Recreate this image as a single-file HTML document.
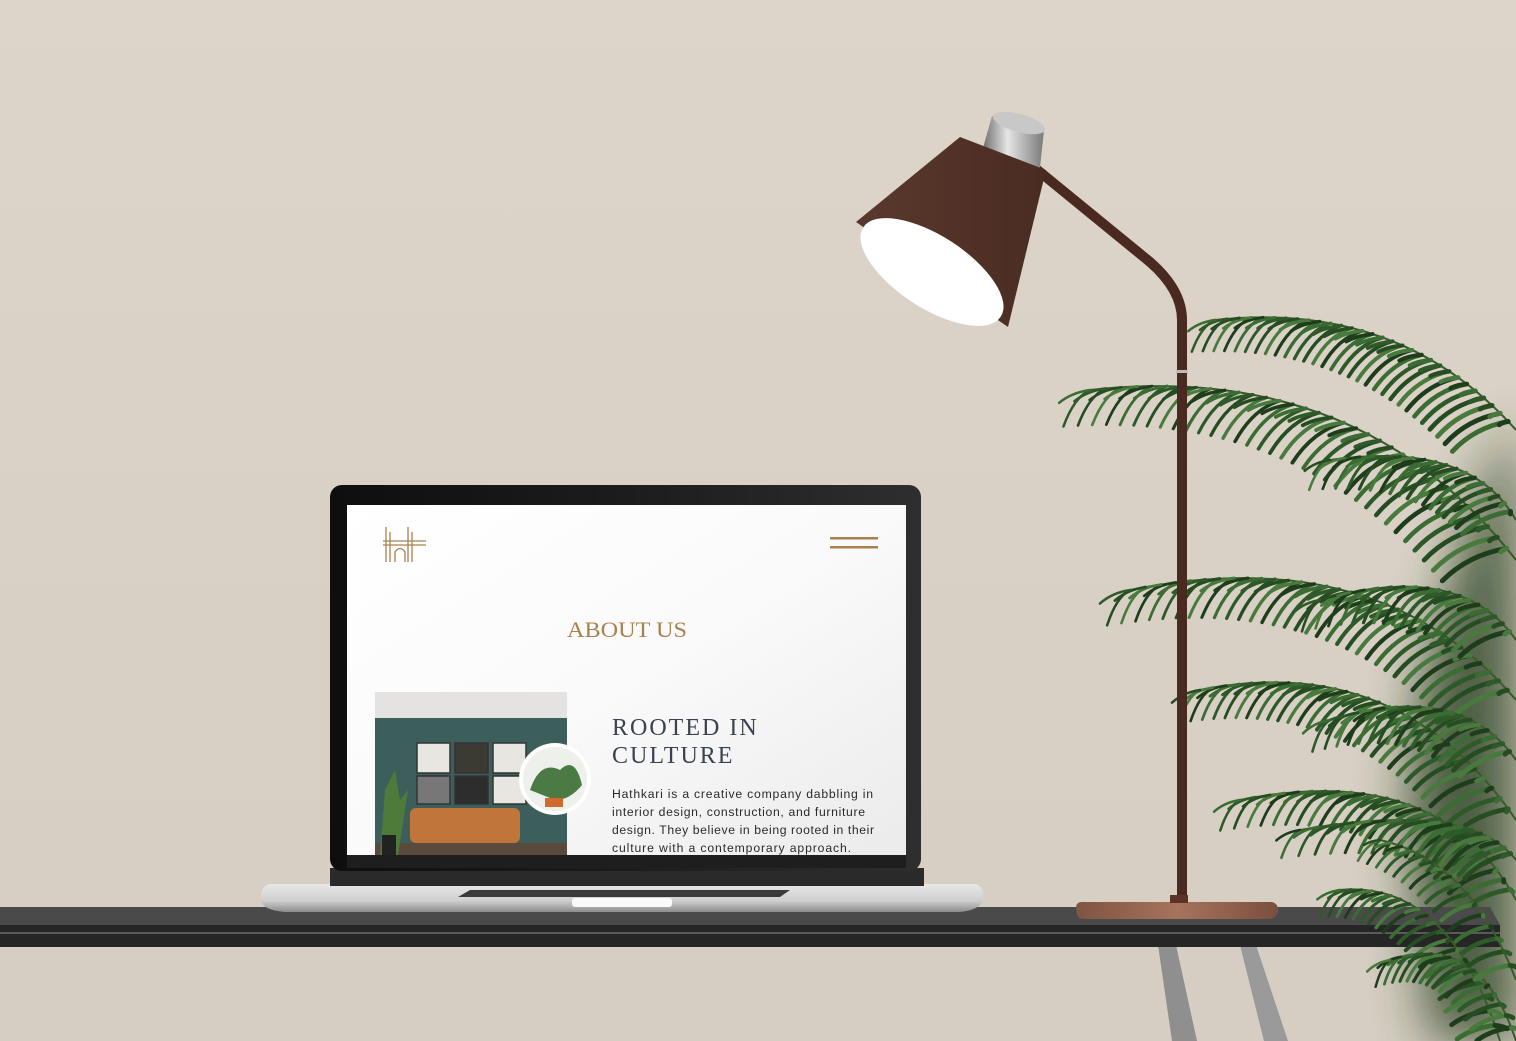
<!DOCTYPE html>
<html><head><meta charset="utf-8"><style>
html,body{margin:0;padding:0;width:1516px;height:1041px;overflow:hidden}
body{background:linear-gradient(180deg,#ddd5ca 0%,#d9d1c5 50%,#d6cec2 100%);position:relative;font-family:"Liberation Sans",sans-serif}
.a{position:absolute}
</style></head><body>
<svg class="a" style="left:0;top:0" width="1516" height="1041">
<defs>
<linearGradient id="scr" x1="0" y1="0" x2="1" y2="1"><stop offset="0" stop-color="#fff"/><stop offset="0.5" stop-color="#fafafa"/><stop offset="1" stop-color="#ebebeb"/></linearGradient>
<linearGradient id="shade" x1="0" y1="0" x2="1" y2="0"><stop offset="0" stop-color="#5a382d"/><stop offset="1" stop-color="#4a2c22"/></linearGradient>
<linearGradient id="cap" x1="0" y1="0" x2="1" y2="0"><stop offset="0" stop-color="#6f6f6f"/><stop offset="0.4" stop-color="#e5e5e5"/><stop offset="1" stop-color="#7a7a7a"/></linearGradient>
<linearGradient id="base" x1="0" y1="0" x2="1" y2="0"><stop offset="0" stop-color="#7e5442"/><stop offset="0.5" stop-color="#a7735c"/><stop offset="1" stop-color="#7a4f3e"/></linearGradient>
<linearGradient id="lap" x1="0" y1="0" x2="0" y2="1"><stop offset="0" stop-color="#e8e8e8"/><stop offset="0.6" stop-color="#cfcfcf"/><stop offset="1" stop-color="#8c8c8c"/></linearGradient>
<linearGradient id="bez" x1="0" y1="0" x2="1" y2="0"><stop offset="0" stop-color="#0e0e0e"/><stop offset="0.5" stop-color="#1c1c1c"/><stop offset="1" stop-color="#2e2e2e"/></linearGradient>
<filter id="bl" filterUnits="userSpaceOnUse" x="1200" y="300" width="516" height="741"><feGaussianBlur stdDeviation="25"/></filter>
</defs>
<path d="M1516,420 Q1470,500 1450,590 Q1400,720 1410,860 Q1420,960 1430,1041 L1516,1041Z" fill="#1c3819" opacity="0.75" filter="url(#bl)"/>
<g id="plant"></g>
<polygon points="1158,945 1176,945 1197,1041 1172,1041" fill="#8f8f8f"/>
<polygon points="1240,945 1256,945 1288,1041 1264,1041" fill="#9a9a9a"/>
<polygon points="0,907 1490,907 1500,925 0,925" fill="#4a4a4a"/>
<rect x="0" y="925" width="1500" height="22" fill="#262626"/>
<rect x="0" y="932" width="1500" height="2" fill="#5a5a5a"/>
<g id="plant2"></g>
<path d="M270,884 L975,884 Q985,886 983,900 Q980,910 960,912 L285,912 Q262,910 261,900 Q260,886 270,884Z" fill="url(#lap)"/>
<polygon points="470,890 790,890 780,897 458,897" fill="#3a3a3a"/>
<rect x="572" y="898" width="100" height="9" rx="3" fill="#fafafa"/>
<rect x="330" y="868" width="594" height="18" fill="#2a2a2a"/>
<rect x="330" y="485" width="591" height="386" rx="12" fill="url(#bez)"/>
<rect x="347" y="505" width="559" height="350" fill="url(#scr)"/>
<g stroke="#a9814f" stroke-width="1.3" fill="none">
<line x1="386" y1="527" x2="386" y2="562"/><line x1="390" y1="532" x2="390" y2="562"/>
<line x1="408" y1="527" x2="408" y2="562"/><line x1="412" y1="532" x2="412" y2="562"/>
<line x1="383" y1="541" x2="426" y2="541"/><line x1="383" y1="545" x2="426" y2="545"/>
<path d="M395,562 L395,552 Q400,545 405,552 L405,562"/>
</g>
<rect x="830" y="537" width="48" height="2.5" fill="#a9814f"/>
<rect x="830" y="546" width="48" height="2.5" fill="#a9814f"/>
<text x="627" y="637" text-anchor="middle" font-family="Liberation Serif,serif" font-size="22" fill="#a9814f" textLength="120" lengthAdjust="spacingAndGlyphs">ABOUT US</text>
<rect x="375" y="692" width="192" height="163" fill="#3d5f5b"/>
<rect x="375" y="692" width="192" height="26" fill="#e4e3e1"/>
<g fill="#e8e6e0" stroke="#333" stroke-width="1.5">
<rect x="417" y="743" width="33" height="30"/><rect x="455" y="743" width="33" height="30" fill="#3b3a33"/><rect x="493" y="743" width="33" height="30"/>
<rect x="417" y="776" width="33" height="28" fill="#777"/><rect x="455" y="776" width="33" height="28" fill="#2d2d2d"/><rect x="493" y="776" width="33" height="28"/>
</g>
<rect x="410" y="808" width="110" height="35" rx="6" fill="#c0763a"/>
<rect x="375" y="843" width="192" height="12" fill="#5a4a3e"/>
<path d="M380,855 L385,790 L395,770 L400,800 L408,790 L398,855Z" fill="#4e7a3a"/>
<rect x="382" y="835" width="14" height="20" fill="#222"/>
<circle cx="555" cy="779" r="36" fill="#fff"/>
<circle cx="555" cy="779" r="32" fill="#eef0ec"/>
<path d="M530,790 Q540,760 560,770 Q575,755 582,785 Q570,800 555,800Z" fill="#4b7a45"/>
<rect x="545" y="798" width="18" height="9" fill="#d06a2a"/>
<text font-family="Liberation Serif,serif" font-size="24" fill="#3b4350" letter-spacing="2"><tspan x="612" y="735">ROOTED IN</tspan><tspan x="612" y="763">CULTURE</tspan></text>
<text font-family="Liberation Sans,sans-serif" font-size="12.2" fill="#2a2a2a"><tspan x="612" y="798" textLength="261">Hathkari is a creative company dabbling in</tspan><tspan x="612" y="816" textLength="253">interior design, construction, and furniture</tspan><tspan x="612" y="834" textLength="262">design. They believe in being rooted in their</tspan><tspan x="612" y="852" textLength="239">culture with a contemporary approach.</tspan></text>
<rect x="347" y="855" width="559" height="13" fill="#1e1e1e"/>
<path d="M1035,168 L1150,262 Q1182,290 1182,320 L1182,905" stroke="#4a2a20" stroke-width="10" fill="none"/>
<rect x="1176" y="370" width="12" height="3" fill="#bbb"/>
<path d="M1082,902 L1272,902 Q1279,904 1278,912 L1276,916 Q1274,919 1268,919 L1084,919 Q1078,919 1077,914 L1076,908 Q1076,902 1082,902Z" fill="url(#base)"/>
<rect x="1170" y="895" width="18" height="8" fill="#5a3428"/>
<polygon points="992,116 1044,130 1040,168 983,148" fill="url(#cap)"/>
<ellipse cx="1019" cy="123" rx="27" ry="9" fill="#c8c8c8" transform="rotate(15 1019 123)"/>
<path d="M960,137 L1046,170 L1008,327 L856,222Z" fill="url(#shade)"/>
<ellipse cx="932" cy="272" rx="82" ry="36" transform="rotate(33 932 272)" fill="#fff"/>
</svg>
<script>
(function(){
var ns='http://www.w3.org/2000/svg';
var cols=['#2d5a28','#3b6c33','#1e3d1b','#48793d','#264d22'];
function draw(gid,fr){
var g=document.getElementById(gid);
fr.forEach(function(f,k){
 var p=document.createElementNS(ns,'path');
 p.setAttribute('d','M'+f[0]+','+f[1]+' Q'+f[2]+','+f[3]+' '+f[4]+','+f[5]);
 p.setAttribute('stroke','#3a5a2c');p.setAttribute('stroke-width','2');p.setAttribute('fill','none');g.appendChild(p);
 var n=f[6]||30;
 for(var i=1;i<=n;i++){var t=i/n;
  var x=(1-t)*(1-t)*f[0]+2*(1-t)*t*f[2]+t*t*f[4],y=(1-t)*(1-t)*f[1]+2*(1-t)*t*f[3]+t*t*f[5];
  var dx=2*(1-t)*(f[2]-f[0])+2*t*(f[4]-f[2]),dy=2*(1-t)*(f[3]-f[1])+2*t*(f[5]-f[3]);
  var L=Math.sqrt(dx*dx+dy*dy);dx/=L;dy/=L;
  var len=(f[7]||60)*(1-0.55*t)+8;
  for(var s=-1;s<=1;s+=2){
   var a=Math.atan2(dy,dx)+s*0.6;var ex=x+Math.cos(a)*len,ey=y+Math.sin(a)*len*0.6+len*0.65;
   var l=document.createElementNS(ns,'path');
   l.setAttribute('d','M'+x+','+y+' Q'+(x+(ex-x)*0.6)+','+(y+(ey-y)*0.2)+' '+ex+','+ey);
   l.setAttribute('stroke',cols[(i+k+(s>0?1:0))%5]);l.setAttribute('stroke-width',(5-2.5*t).toFixed(1));
   l.setAttribute('fill','none');l.setAttribute('stroke-linecap','round');g.appendChild(l);}
 }
});}
draw('plant',[[1516,430,1400,300,1215,320,30,50],[1516,560,1360,360,1090,390,34,60],[1516,700,1380,540,1130,590,32,55],[1516,820,1400,650,1200,690,30,50],[1516,900,1440,760,1240,800,26,45],
[1516,520,1470,440,1330,460,18,45],[1516,640,1460,560,1320,600,18,45],[1516,760,1460,680,1330,720,18,45],[1516,860,1470,800,1300,830,18,40]]);
draw('plant2',[[1500,1041,1450,880,1340,890,20,40],[1516,1041,1480,930,1390,960,16,35],[1516,980,1470,860,1380,840,16,35]]);
})();
</script>
</body></html>
